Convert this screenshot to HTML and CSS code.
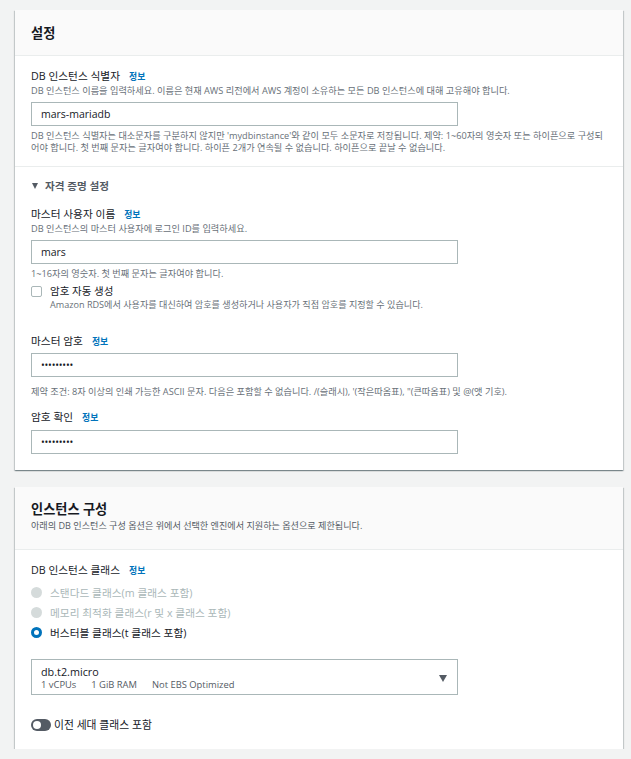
FILE: index.html
```html
<!DOCTYPE html>
<html lang="ko">
<head>
<meta charset="utf-8">
<title>설정</title>
<link rel="stylesheet" href="styles.css">
</head>
<body>
<div class="page">
  <section class="card card-settings">
    <div class="card-header">
      <h2 class="card-title">설정</h2>
    </div>
    <div class="card-body">
      <div class="field">
        <div class="label"><span>DB 인스턴스 식별자</span><a class="info">정보</a></div>
        <div class="desc">DB 인스턴스 이름을 입력하세요. 이름은 현재 AWS 리전에서 AWS 계정이 소유하는 모든 DB 인스턴스에 대해 고유해야 합니다.</div>
        <input class="input" type="text" value="mars-mariadb" readonly>
        <div class="help">DB 인스턴스 식별자는 대소문자를 구분하지 않지만 'mydbinstance'와 같이 모두 소문자로 저장됩니다. 제약: 1~60자의 영숫자 또는 하이픈으로 구성되<br>어야 합니다. 첫 번째 문자는 글자여야 합니다. 하이픈 2개가 연속될 수 없습니다. 하이픈으로 끝날 수 없습니다.</div>
      </div>
    </div>
    <div class="expand">
      <div class="expand-header"><span class="caret-down"></span>자격 증명 설정</div>
      <div class="field field-user">
        <div class="label"><span>마스터 사용자 이름</span><a class="info">정보</a></div>
        <div class="desc">DB 인스턴스의 마스터 사용자에 로그인 ID를 입력하세요.</div>
        <input class="input" type="text" value="mars" readonly>
        <div class="help">1~16자의 영숫자. 첫 번째 문자는 글자여야 합니다.</div>
      </div>
      <div class="check-row">
        <span class="checkbox"></span>
        <div class="check-text">
          <div class="check-label">암호 자동 생성</div>
          <div class="check-desc">Amazon RDS에서 사용자를 대신하여 암호를 생성하거나 사용자가 직접 암호를 지정할 수 있습니다.</div>
        </div>
      </div>
      <div class="field field-pass">
        <div class="label"><span>마스터 암호</span><a class="info">정보</a></div>
        <input class="input input-pass" type="password" value="mariadb12" readonly>
        <div class="help help-pass">제약 조건: 8자 이상의 인쇄 가능한 ASCII 문자. 다음은 포함할 수 없습니다. /(슬래시), '(작은따옴표), "(큰따옴표) 및 @(앳 기호).</div>
      </div>
      <div class="field field-confirm">
        <div class="label"><span>암호 확인</span><a class="info">정보</a></div>
        <input class="input input-pass input-confirm" type="password" value="mariadb12" readonly>
      </div>
    </div>
  </section>

  <section class="card card-instance">
    <div class="card-header card-header-tall">
      <h2 class="card-title">인스턴스 구성</h2>
      <div class="header-desc">아래의 DB 인스턴스 구성 옵션은 위에서 선택한 엔진에서 지원하는 옵션으로 제한됩니다.</div>
    </div>
    <div class="card-body card-body-instance">
      <div class="label"><span>DB 인스턴스 클래스</span><a class="info">정보</a></div>
      <div class="radios">
        <div class="radio-row disabled"><span class="radio"></span>스탠다드 클래스(m 클래스 포함)</div>
        <div class="radio-row disabled"><span class="radio"></span>메모리 최적화 클래스(r 및 x 클래스 포함)</div>
        <div class="radio-row"><span class="radio checked"></span>버스터블 클래스(t 클래스 포함)</div>
      </div>
      <div class="select">
        <div class="select-text">
          <div class="select-value">db.t2.micro</div>
          <div class="select-meta"><span>1 vCPUs</span><span>1 GiB RAM</span><span>Not EBS Optimized</span></div>
        </div>
        <span class="select-caret"></span>
      </div>
      <div class="toggle-row">
        <span class="toggle"><span class="knob"></span></span>
        <span class="toggle-label">이전 세대 클래스 포함</span>
      </div>
    </div>
  </section>
</div>
</body>
</html>
```

FILE: styles.css
```css
* { box-sizing: border-box; }

html, body {
  margin: 0;
  padding: 0;
  background: #f2f3f3;
}

body {
  font-family: "Open Sans", "Noto Sans CJK KR", sans-serif;
  color: #16191f;
}

.page {
  padding: 10px 8px 0 15px;
  display: flex;
  flex-direction: column;
  gap: 17px;
}

.card {
  background: #fff;
  box-shadow: 0 1px 1px 0 rgba(0, 28, 36, 0.3), 1px 1px 1px 0 rgba(0, 28, 36, 0.15), -1px 1px 1px 0 rgba(0, 28, 36, 0.15);
}

.card-header {
  height: 46px;
  padding: 0 16px;
  background: #fafafa;
  border-bottom: 1px solid #eaeded;
  display: flex;
  align-items: center;
}

.card-header-tall {
  height: 63px;
  display: block;
  padding: 12px 16px 0;
}

.card-title {
  margin: 0;
  font-size: 13.2px;
  line-height: 20px;
  height: 20px;
  font-weight: 700;
  color: #16191f;
}

.header-desc {
  font-size: 9.1px;
  line-height: 14px;
  height: 14px;
  color: #545b64;
}

.card-body {
  padding: 12px 16px 12px;
}

.label {
  display: flex;
  align-items: baseline;
  height: 16px;
  font-size: 10.7px;
  line-height: 16px;
  color: #16191f;
}

.info {
  margin-left: 9px;
  font-size: 8.8px;
  line-height: 10px;
  font-weight: 700;
  color: #0073bb;
}

.desc {
  font-size: 9.2px;
  line-height: 14px;
  height: 14px;
  color: #687078;
  white-space: nowrap;
}

.input {
  display: block;
  width: 427px;
  height: 24px;
  margin: 4px 0 0;
  padding: 0 9px;
  border: 1px solid #aab7b8;
  border-radius: 0;
  background: #fff;
  font-family: "Open Sans", "Noto Sans CJK KR", sans-serif;
  font-size: 10.5px;
  color: #16191f;
  outline: none;
}

.input-pass {
  font-size: 10px;
  letter-spacing: -0.2px;
}

.input-confirm {
  margin-top: 5px;
}

.help {
  margin-top: 4px;
  font-size: 9.2px;
  line-height: 12px;
  color: #687078;
  white-space: nowrap;
}

.help-pass {
  margin-top: 9px;
}

.expand {
  border-top: 1px solid #eaeded;
  padding: 11px 16px 16px;
}

.expand-header {
  display: flex;
  align-items: center;
  height: 16px;
  font-size: 10.6px;
  line-height: 16px;
  font-weight: 700;
  color: #545b64;
}

.caret-down {
  width: 0;
  height: 0;
  margin: 0 7px 0 1px;
  border-left: 3.5px solid transparent;
  border-right: 3.5px solid transparent;
  border-top: 6px solid #545b64;
}

.field-user {
  margin-top: 12px;
}

.field-pass {
  margin-top: 21px;
}

.field-confirm {
  margin-top: 11px;
}

.check-row {
  margin-top: 4px;
  display: flex;
  align-items: flex-start;
}

.checkbox {
  flex: none;
  width: 11px;
  height: 11px;
  margin-top: 2px;
  margin-right: 8px;
  border: 1px solid #aab7b8;
  border-radius: 2px;
  background: #fff;
}

.check-label {
  font-size: 10.5px;
  line-height: 14px;
  height: 14px;
}

.check-desc {
  font-size: 9.1px;
  line-height: 14px;
  height: 14px;
  color: #687078;
  white-space: nowrap;
}

.card-body-instance {
  padding: 12px 16px 16px;
}

.radios {
  margin-top: 4px;
}

.radio-row {
  display: flex;
  align-items: center;
  height: 20px;
  font-size: 10.7px;
  color: #16191f;
}

.radio-row.disabled {
  color: #aab7b8;
}

.radio {
  flex: none;
  width: 11px;
  height: 11px;
  margin-right: 8px;
  border-radius: 50%;
  background: #d5dbdb;
}

.radio.checked {
  background: #fff;
  border: 3.5px solid #0073bb;
}

.select {
  margin-top: 17px;
  width: 427px;
  height: 36px;
  border: 1px solid #aab7b8;
  padding: 5px 10px 4px 9px;
  display: flex;
  align-items: center;
  justify-content: space-between;
}

.select-value {
  font-size: 10.8px;
  line-height: 14px;
  color: #16191f;
}

.select-meta {
  display: flex;
  gap: 15px;
  font-size: 9.4px;
  line-height: 12px;
  color: #545b64;
}

.select-caret {
  width: 0;
  height: 0;
  margin-top: 1px;
  border-left: 4px solid transparent;
  border-right: 4px solid transparent;
  border-top: 7px solid #545b64;
}

.toggle-row {
  margin-top: 22px;
  display: flex;
  align-items: center;
  height: 16px;
}

.toggle {
  position: relative;
  flex: none;
  width: 20px;
  height: 12px;
  margin-right: 3px;
  border-radius: 6px;
  background: #545b64;
}

.knob {
  position: absolute;
  left: 2px;
  top: 2px;
  width: 8px;
  height: 8px;
  border-radius: 50%;
  background: #fff;
}

.toggle-label {
  font-size: 10.8px;
  line-height: 16px;
  color: #16191f;
}
```
